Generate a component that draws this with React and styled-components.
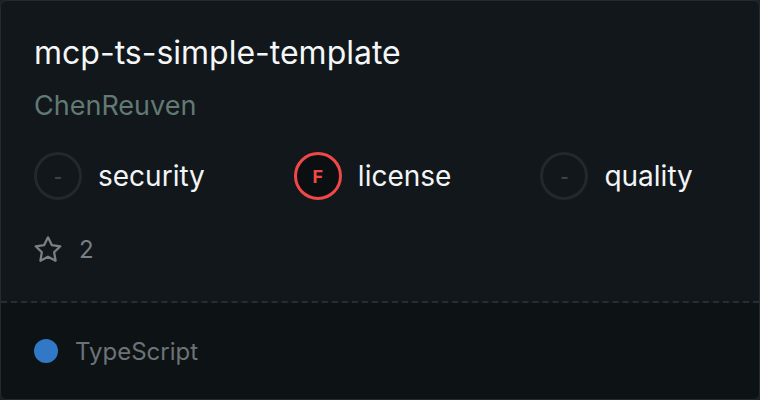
import React from 'react'
import styled, { createGlobalStyle } from 'styled-components'

const Global = createGlobalStyle`
  html, body { margin: 0; padding: 0; background: #1c2326; }
  body { font-family: Inter, "Noto Sans", sans-serif; }
`

const Card = styled.div`
  width: 760px;
  height: 400px;
  box-sizing: border-box;
  border: 1px solid #232b2f;
  border-radius: 7px;
  overflow: hidden;
  display: flex;
  flex-direction: column;
  background: #11171a;
`

const Top = styled.div`
  flex: 1;
  padding: 33px 33px 0;
  display: flex;
  flex-direction: column;
  border-bottom: 2px dashed #262e32;
`

const Title = styled.h1`
  margin: 0;
  font-size: 32px;
  font-weight: 400;
  color: #f4f6f7;
  line-height: 38px;
`

const Owner = styled.div`
  margin-top: 17px;
  font-size: 27px;
  color: #627a73;
  line-height: 34px;
`

const Scores = styled.div`
  margin-top: 29px;
  display: flex;
  gap: 89px;
  align-items: center;
`

const Score = styled.div`
  display: flex;
  align-items: center;
  gap: 16px;
`

const Ring = styled.div`
  width: 48px;
  height: 48px;
  box-sizing: border-box;
  border-radius: 50%;
  border: 3px solid ${p => (p.$grade ? '#f04848' : '#22292c')};
  background: ${p => (p.$grade ? '#0b0f11' : 'transparent')};
  display: flex;
  align-items: center;
  justify-content: center;
  font-size: 18px;
  font-weight: 700;
  color: ${p => (p.$grade ? '#f04848' : '#3a4346')};
`

const Label = styled.span`
  font-size: 28px;
  color: #f2f4f5;
`

const Stars = styled.div`
  margin-top: 35px;
  display: flex;
  align-items: center;
  gap: 17px;
  font-size: 24px;
  color: #7a8084;
`

const Bottom = styled.div`
  height: 96px;
  background: #0d1215;
  padding: 0 33px;
  display: flex;
  align-items: center;
  gap: 17px;
`

const Dot = styled.span`
  width: 24px;
  height: 24px;
  border-radius: 50%;
  background: ${p => p.$color};
`

const Lang = styled.span`
  font-size: 24px;
  color: #6c7377;
`

function ScoreItem({ grade, label }) {
  return (
    <Score>
      <Ring $grade={grade}>{grade || '-'}</Ring>
      <Label>{label}</Label>
    </Score>
  )
}

export default function App() {
  return (
    <>
      <Global />
      <Card>
        <Top>
          <Title>mcp-ts-simple-template</Title>
          <Owner>ChenReuven</Owner>
          <Scores>
            <ScoreItem label="security" />
            <ScoreItem grade="F" label="license" />
            <ScoreItem label="quality" />
          </Scores>
          <Stars>
            <svg width="28" height="28" viewBox="1.5 1.8 21 21" fill="none" stroke="#7a8084" strokeWidth="1.7" strokeLinejoin="round">
              <path d="M12 2.8l2.85 5.78 6.38.93-4.62 4.5 1.09 6.35L12 17.36l-5.7 3 1.09-6.35-4.62-4.5 6.38-.93z" />
            </svg>
            <span>2</span>
          </Stars>
        </Top>
        <Bottom>
          <Dot $color="#3178c6" />
          <Lang>TypeScript</Lang>
        </Bottom>
      </Card>
    </>
  )
}
